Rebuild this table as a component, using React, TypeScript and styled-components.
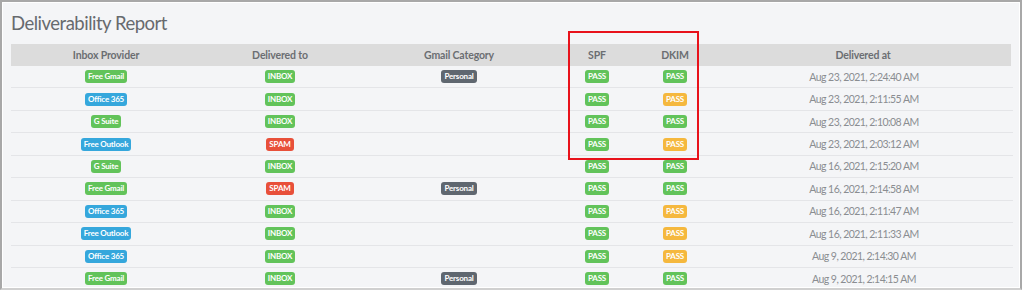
import styled, {createGlobalStyle} from "styled-components";

const GlobalStyle = createGlobalStyle`
  html, body {
    margin: 0;
    padding: 0;
    background: #ffffff;
  }
  body {
    font-family: "Lato", "Open Sans", sans-serif;
  }
`

type Tone = "green" | "blue" | "red" | "orange" | "dark";

const toneColor: Record<Tone, string> = {
    green: "#62c35a",
    blue: "#35a7dc",
    red: "#e8503a",
    orange: "#f5b83e",
    dark: "#5f6770",
};

type Row = {
    provider: string;
    providerTone: Tone;
    spam: boolean;
    personal: boolean;
    dkimWarn: boolean;
    at: string;
};

const rows: Row[] = [
    {provider: "Free Gmail", providerTone: "green", spam: false, personal: true, dkimWarn: false, at: "Aug 23, 2021, 2:24:40 AM"},
    {provider: "Office 365", providerTone: "blue", spam: false, personal: false, dkimWarn: true, at: "Aug 23, 2021, 2:11:55 AM"},
    {provider: "G Suite", providerTone: "green", spam: false, personal: false, dkimWarn: false, at: "Aug 23, 2021, 2:10:08 AM"},
    {provider: "Free Outlook", providerTone: "blue", spam: true, personal: false, dkimWarn: true, at: "Aug 23, 2021, 2:03:12 AM"},
    {provider: "G Suite", providerTone: "green", spam: false, personal: false, dkimWarn: false, at: "Aug 16, 2021, 2:15:20 AM"},
    {provider: "Free Gmail", providerTone: "green", spam: true, personal: true, dkimWarn: false, at: "Aug 16, 2021, 2:14:58 AM"},
    {provider: "Office 365", providerTone: "blue", spam: false, personal: false, dkimWarn: true, at: "Aug 16, 2021, 2:11:47 AM"},
    {provider: "Free Outlook", providerTone: "blue", spam: false, personal: false, dkimWarn: true, at: "Aug 16, 2021, 2:11:33 AM"},
    {provider: "Office 365", providerTone: "blue", spam: false, personal: false, dkimWarn: true, at: "Aug 9, 2021, 2:14:30 AM"},
    {provider: "Free Gmail", providerTone: "green", spam: false, personal: true, dkimWarn: false, at: "Aug 9, 2021, 2:14:15 AM"},
];

export default function App() {
    return (
        <>
            <GlobalStyle/>
            <Frame>
                <Title>Deliverability Report</Title>
                <Table>
                    <HeadRow>
                        <HeadCell>Inbox Provider</HeadCell>
                        <HeadCell>Delivered to</HeadCell>
                        <HeadCell>Gmail Category</HeadCell>
                        <HeadCell>SPF</HeadCell>
                        <HeadCell>DKIM</HeadCell>
                        <HeadCell>Delivered at</HeadCell>
                    </HeadRow>
                    {rows.map((r, i) => (
                        <BodyRow key={i}>
                            <Cell><Badge tone={r.providerTone}>{r.provider}</Badge></Cell>
                            <Cell>{r.spam ? <Badge tone="red">SPAM</Badge> : <Badge tone="green">INBOX</Badge>}</Cell>
                            <Cell>{r.personal && <Badge tone="dark">Personal</Badge>}</Cell>
                            <Cell><Badge tone="green">PASS</Badge></Cell>
                            <Cell><Badge tone={r.dkimWarn ? "orange" : "green"}>PASS</Badge></Cell>
                            <DateCell>{r.at}</DateCell>
                        </BodyRow>
                    ))}
                    <Highlight/>
                </Table>
            </Frame>
        </>
    )
}

const Frame = styled.div`
  box-sizing: border-box;
  width: 1022px;
  height: 290px;
  overflow: hidden;
  background: #f4f5f7;
  border: 2px solid #a8a8a8;
  border-bottom-color: #d0d0d0;
  box-shadow: inset 0 0 0 1px #ffffff;
  padding: 0 7px 0 9px;
`
const Title = styled.h1`
  margin: 0;
  padding: 10px 0 0;
  height: 32px;
  font-size: 18.5px;
  font-weight: 400;
  letter-spacing: -0.5px;
  line-height: 22px;
  color: #676a6e;
`
const Table = styled.div`
  position: relative;
  display: flex;
  flex-direction: column;
`
const cols = "190px 158px 200px 76px 80px 1fr";

const HeadRow = styled.div`
  display: grid;
  grid-template-columns: ${cols};
  height: 22px;
  background: #dcdcdc;
  margin-right: 2px;
`
const HeadCell = styled.div`
  display: flex;
  align-items: center;
  justify-content: center;
  font-size: 10.5px;
  font-weight: 700;
  letter-spacing: -0.15px;
  color: #6b6e72;
`
const BodyRow = styled.div`
  display: grid;
  grid-template-columns: ${cols};
  box-sizing: border-box;
  height: 22.45px;
  border-bottom: 1px solid #e4e5e8;
`
const Cell = styled.div`
  display: flex;
  align-items: center;
  justify-content: center;
`
const DateCell = styled(Cell)`
  font-size: 10.5px;
  letter-spacing: -0.55px;
  color: #8a8d91;
`
const Badge = styled.span<{tone: Tone}>`
  display: inline-block;
  background: ${p => toneColor[p.tone]};
  color: #ffffff;
  font-size: 8px;
  font-weight: 700;
  letter-spacing: -0.2px;
  line-height: 13px;
  padding: 0 3px;
  border-radius: 3px;
  white-space: nowrap;
`
const Highlight = styled.div`
  position: absolute;
  left: 557px;
  top: -13px;
  width: 131px;
  height: 129px;
  box-sizing: border-box;
  border: 2px solid #e8121b;
  pointer-events: none;
`
